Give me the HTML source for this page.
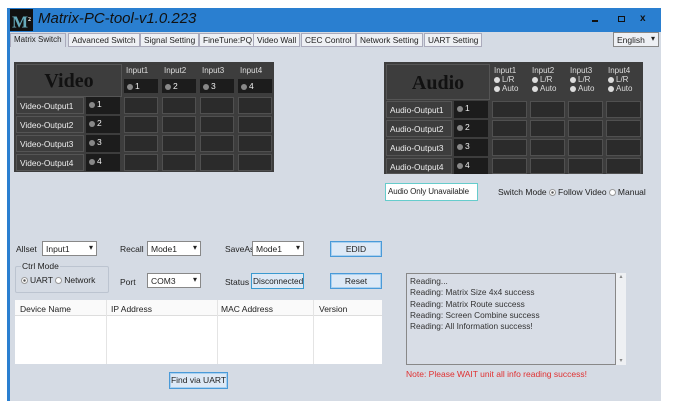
<!DOCTYPE html><html><head><style>
*{margin:0;padding:0;box-sizing:border-box}
body{width:676px;height:409px;background:#fff;position:relative;overflow:hidden;font-family:"Liberation Sans",sans-serif;font-size:8.5px;color:#222}
.a{position:absolute;white-space:nowrap}
.title{left:7px;top:8px;width:654px;height:24px;background:#2a7fd0}
.win{left:7px;top:32px;width:654px;height:369px;background:#d5dbe4;border-left:3px solid #2a7fd0}
.tab{position:absolute;top:33px;height:14px;border:1px solid #aab;background:#eef0f4;font-size:8.3px;padding:1px 3px;white-space:nowrap}
.dk{background:#3d3d3d}
.cell{position:absolute;background:#2b2b2b;border:1px solid #505050}
.lbl{position:absolute;background:#3d3d3d;color:#eee;font-size:8.3px;padding:3px 3px;border:1px solid #555;white-space:nowrap}
.led{display:inline-block;width:6px;height:6px;border-radius:50%;background:#888;margin-right:2px;vertical-align:-1px}
.num{position:absolute;background:#1c1c1c;color:#eee;font-size:8.5px;padding:2px 3px}
.ih{position:absolute;color:#ddd;font-size:8px;white-space:nowrap}
.sel{position:absolute;background:#fff;border:1px solid #888;height:15px;font-size:8.5px;padding:2px 3px}
.sel:after{content:"▾";position:absolute;right:3px;top:1px;font-size:8px}
.btn{position:absolute;background:#dde9f6;border:1px solid #4a9ad8;box-shadow:inset 0 0 0 1px #a8d0f0;text-align:center;font-size:8.5px;height:16px;line-height:14px}
.r{display:inline-block;width:7px;height:7px;border-radius:50%;border:1px solid #999;background:#fff;vertical-align:-1px;margin-right:2px}
.r.on{background:radial-gradient(#555 30%,#fff 40%)}
</style></head><body>
<div class="a title"></div>
<div class="a" style="left:10px;top:9px;width:23px;height:22px;background:#111;color:#6ab;font:bold 17px 'Liberation Serif',serif;text-align:center;line-height:22px">M<sup style="font-size:6px;color:#fff">2</sup></div>
<div class="a" style="left:38px;top:10px;color:#111;font-style:italic;font-size:15px">Matrix-PC-tool-v1.0.223</div>
<div class="a" style="left:592px;top:20px;width:6px;height:2px;background:#111"></div>
<div class="a" style="left:618px;top:16px;width:7px;height:6px;border:1.5px solid #111"></div>
<div class="a" style="left:640px;top:13px;color:#111;font-size:10px;font-weight:bold">x</div>
<div class="a win"></div>
<div class="tab" style="left:10px;background:#d5dbe4;border-bottom:none;font-size:8px">Matrix Switch</div>
<div class="tab" style="left:68px">Advanced Switch</div>
<div class="tab" style="left:140px">Signal Setting</div>
<div class="tab" style="left:199px">FineTune:PQ</div>
<div class="tab" style="left:253px">Video Wall</div>
<div class="tab" style="left:301px">CEC Control</div>
<div class="tab" style="left:356px">Network Setting</div>
<div class="tab" style="left:424px">UART Setting</div>
<div class="sel" style="left:613px;top:32px;width:46px;background:#eef0f4">English</div>

<!-- Video -->
<div class="a dk" style="left:14px;top:62px;width:260px;height:110px"></div>
<div class="lbl" style="left:16px;top:64px;width:106px;height:33px;font:bold 20px 'Liberation Serif',serif;color:#111;text-align:center;line-height:26px">Video</div>
<div class="ih" style="left:126px;top:66px">Input1</div><div class="ih" style="left:164px;top:66px">Input2</div><div class="ih" style="left:202px;top:66px">Input3</div><div class="ih" style="left:240px;top:66px">Input4</div>
<div class="num" style="left:124px;top:79px;width:34px"><span class="led"></span>1</div>
<div class="num" style="left:162px;top:79px;width:34px"><span class="led"></span>2</div>
<div class="num" style="left:200px;top:79px;width:34px"><span class="led"></span>3</div>
<div class="num" style="left:238px;top:79px;width:34px"><span class="led"></span>4</div>
<div class="lbl" style="left:16px;top:97px;width:68px;height:17px">Video-Output1</div><div class="num" style="left:86px;top:97px;width:34px;height:17px"><span class="led"></span>1</div>
<div class="lbl" style="left:16px;top:116px;width:68px;height:17px">Video-Output2</div><div class="num" style="left:86px;top:116px;width:34px;height:17px"><span class="led"></span>2</div>
<div class="lbl" style="left:16px;top:135px;width:68px;height:17px">Video-Output3</div><div class="num" style="left:86px;top:135px;width:34px;height:17px"><span class="led"></span>3</div>
<div class="lbl" style="left:16px;top:154px;width:68px;height:17px">Video-Output4</div><div class="num" style="left:86px;top:154px;width:34px;height:17px"><span class="led"></span>4</div>
<div class="cell" style="left:124px;top:97px;width:34px;height:17px"></div><div class="cell" style="left:162px;top:97px;width:34px;height:17px"></div><div class="cell" style="left:200px;top:97px;width:34px;height:17px"></div><div class="cell" style="left:238px;top:97px;width:34px;height:17px"></div>
<div class="cell" style="left:124px;top:116px;width:34px;height:17px"></div><div class="cell" style="left:162px;top:116px;width:34px;height:17px"></div><div class="cell" style="left:200px;top:116px;width:34px;height:17px"></div><div class="cell" style="left:238px;top:116px;width:34px;height:17px"></div>
<div class="cell" style="left:124px;top:135px;width:34px;height:17px"></div><div class="cell" style="left:162px;top:135px;width:34px;height:17px"></div><div class="cell" style="left:200px;top:135px;width:34px;height:17px"></div><div class="cell" style="left:238px;top:135px;width:34px;height:17px"></div>
<div class="cell" style="left:124px;top:154px;width:34px;height:17px"></div><div class="cell" style="left:162px;top:154px;width:34px;height:17px"></div><div class="cell" style="left:200px;top:154px;width:34px;height:17px"></div><div class="cell" style="left:238px;top:154px;width:34px;height:17px"></div>

<!-- Audio -->
<div class="a dk" style="left:384px;top:62px;width:259px;height:112px"></div>
<div class="lbl" style="left:386px;top:64px;width:104px;height:36px;font:bold 20px 'Liberation Serif',serif;color:#111;text-align:center;line-height:30px">Audio</div>
<div class="ih" style="left:494px;top:66px;line-height:9px">Input1<br><span class="led" style="background:#ddd"></span>L/R<br><span class="led" style="background:#ddd"></span>Auto</div>
<div class="ih" style="left:532px;top:66px;line-height:9px">Input2<br><span class="led" style="background:#ddd"></span>L/R<br><span class="led" style="background:#ddd"></span>Auto</div>
<div class="ih" style="left:570px;top:66px;line-height:9px">Input3<br><span class="led" style="background:#ddd"></span>L/R<br><span class="led" style="background:#ddd"></span>Auto</div>
<div class="ih" style="left:608px;top:66px;line-height:9px">Input4<br><span class="led" style="background:#ddd"></span>L/R<br><span class="led" style="background:#ddd"></span>Auto</div>
<div class="lbl" style="left:386px;top:101px;width:66px;height:17px">Audio-Output1</div><div class="num" style="left:454px;top:101px;width:34px;height:17px"><span class="led"></span>1</div>
<div class="lbl" style="left:386px;top:120px;width:66px;height:17px">Audio-Output2</div><div class="num" style="left:454px;top:120px;width:34px;height:17px"><span class="led"></span>2</div>
<div class="lbl" style="left:386px;top:139px;width:66px;height:17px">Audio-Output3</div><div class="num" style="left:454px;top:139px;width:34px;height:17px"><span class="led"></span>3</div>
<div class="lbl" style="left:386px;top:158px;width:66px;height:16px">Audio-Output4</div><div class="num" style="left:454px;top:158px;width:34px;height:16px"><span class="led"></span>4</div>
<div class="cell" style="left:492px;top:101px;width:35px;height:17px"></div><div class="cell" style="left:530px;top:101px;width:35px;height:17px"></div><div class="cell" style="left:568px;top:101px;width:35px;height:17px"></div><div class="cell" style="left:606px;top:101px;width:35px;height:17px"></div>
<div class="cell" style="left:492px;top:120px;width:35px;height:17px"></div><div class="cell" style="left:530px;top:120px;width:35px;height:17px"></div><div class="cell" style="left:568px;top:120px;width:35px;height:17px"></div><div class="cell" style="left:606px;top:120px;width:35px;height:17px"></div>
<div class="cell" style="left:492px;top:139px;width:35px;height:17px"></div><div class="cell" style="left:530px;top:139px;width:35px;height:17px"></div><div class="cell" style="left:568px;top:139px;width:35px;height:17px"></div><div class="cell" style="left:606px;top:139px;width:35px;height:17px"></div>
<div class="cell" style="left:492px;top:158px;width:35px;height:16px"></div><div class="cell" style="left:530px;top:158px;width:35px;height:16px"></div><div class="cell" style="left:568px;top:158px;width:35px;height:16px"></div><div class="cell" style="left:606px;top:158px;width:35px;height:16px"></div>

<div class="a" style="left:385px;top:183px;width:93px;height:18px;background:#fff;border:1px solid #6cc;padding:3px 2px;font-size:8px;letter-spacing:-0.1px">Audio Only Unavailable</div>
<div class="a" style="left:498px;top:187px">Switch Mode <span class="r on"></span>Follow Video <span class="r"></span>Manual</div>

<!-- bottom controls -->
<div class="a" style="left:16px;top:244px">Allset</div>
<div class="sel" style="left:42px;top:241px;width:55px">Input1</div>
<div class="a" style="left:120px;top:244px">Recall</div>
<div class="sel" style="left:147px;top:241px;width:54px">Mode1</div>
<div class="a" style="left:225px;top:244px">SaveAs</div>
<div class="sel" style="left:252px;top:241px;width:52px">Mode1</div>
<div class="btn" style="left:330px;top:241px;width:52px">EDID</div>
<div class="a" style="left:15px;top:266px;width:94px;height:27px;border:1px solid #bcc4d0;border-radius:2px"></div>
<div class="a" style="left:21px;top:261px;background:#d5dbe4;padding:0 1px">Ctrl Mode</div>
<div class="a" style="left:21px;top:275px"><span class="r on"></span>UART <span class="r"></span>Network</div>
<div class="a" style="left:120px;top:277px">Port</div>
<div class="sel" style="left:147px;top:273px;width:54px">COM3</div>
<div class="a" style="left:225px;top:277px">Status</div>
<div class="a" style="left:251px;top:273px;width:53px;height:16px;background:#dde9f6;border:1px solid #3a9ad0;font-size:8.3px;padding:2px 1px">Disconnected</div>
<div class="btn" style="left:330px;top:273px;width:52px">Reset</div>

<div class="a" style="left:15px;top:300px;width:367px;height:64px;background:#fff"></div>
<div class="a" style="left:15px;top:300px;width:367px;height:16px;border-bottom:1px solid #ddd;background:#fafafa"></div>
<div class="a" style="left:106px;top:300px;width:1px;height:64px;background:#e4e4e4"></div>
<div class="a" style="left:217px;top:300px;width:1px;height:64px;background:#e4e4e4"></div>
<div class="a" style="left:313px;top:300px;width:1px;height:64px;background:#e4e4e4"></div>
<div class="a" style="left:20px;top:304px">Device Name</div>
<div class="a" style="left:111px;top:304px">IP Address</div>
<div class="a" style="left:221px;top:304px">MAC Address</div>
<div class="a" style="left:319px;top:304px">Version</div>
<div class="btn" style="left:169px;top:372px;width:59px;height:17px">Find via UART</div>

<div class="a" style="left:406px;top:273px;width:210px;height:92px;background:#d8dde6;border:1px solid #888;padding:2px 3px;line-height:11.3px;font-size:8.3px;color:#333">Reading...<br>Reading: Matrix Size 4x4 success<br>Reading: Matrix Route success<br>Reading: Screen Combine success<br>Reading: All Information success!</div>
<div class="a" style="left:616px;top:273px;width:10px;height:92px;background:#eef0f3;font-size:6px;color:#888;text-align:center">▴<div style="position:absolute;bottom:1px;width:10px">▾</div></div>
<div class="a" style="left:406px;top:369px;color:#e03030;font-size:8.5px">Note: Please WAIT unit all info reading success!</div>
</body></html>
